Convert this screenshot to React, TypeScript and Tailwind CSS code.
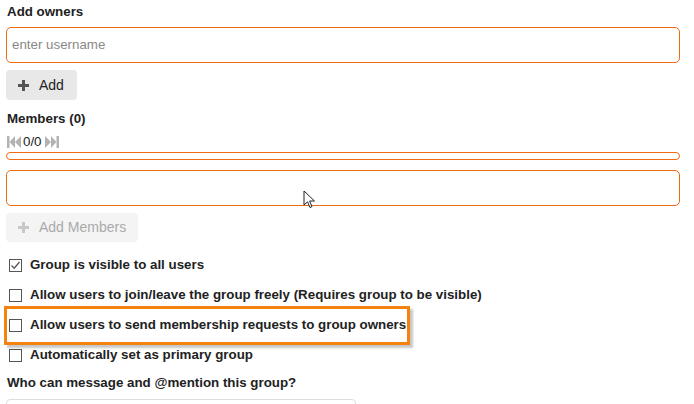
import React from "react";

const font = { fontFamily: '"Liberation Sans", Arial, sans-serif' };

function Plus({ color }: { color: string }) {
  return (
    <svg width="11" height="11" viewBox="0 0 11 11">
      <rect x="4" y="0" width="3" height="11" fill={color} />
      <rect x="0" y="4" width="11" height="3" fill={color} />
    </svg>
  );
}

function First() {
  return (
    <svg width="14" height="12" viewBox="0 0 14 12">
      <rect x="0" y="0" width="2.5" height="12" fill="#b3b3b3" />
      <polygon points="8,0 8,12 2.5,6" fill="#b3b3b3" />
      <polygon points="14,0 14,12 8,6" fill="#b3b3b3" />
    </svg>
  );
}

function Last() {
  return (
    <svg width="14" height="12" viewBox="0 0 14 12">
      <polygon points="0,0 0,12 6,6" fill="#b3b3b3" />
      <polygon points="6,0 6,12 11.5,6" fill="#b3b3b3" />
      <rect x="11.5" y="0" width="2.5" height="12" fill="#b3b3b3" />
    </svg>
  );
}

function Check({ checked, label }: { checked?: boolean; label: string }) {
  return (
    <div className="flex items-center h-[30px] pl-[3px]">
      <div className="w-[13px] h-[13px] border border-[#555] bg-white flex items-center justify-center">
        {checked && (
          <svg width="11" height="11" viewBox="0 0 11 11">
            <polyline points="1.5,5.5 4.2,8.2 9.5,2" fill="none" stroke="#555" strokeWidth="1.3" />
          </svg>
        )}
      </div>
      <span className="ml-[8px] text-[13.33px] font-bold text-[#222]">{label}</span>
    </div>
  );
}

export default function App() {
  return (
    <div className="relative w-[694px] h-[404px] bg-white overflow-hidden" style={font}>
      <div className="pl-[6px] pr-[14px] pt-[3px]">
        <div className="pl-[1px] text-[13.33px] leading-[18px] font-bold text-[#222]">Add owners</div>
        <div className="mt-[6px] h-[36px] border border-[#f06a14] rounded-[5px] flex items-center pl-[5px]">
          <span className="text-[13.33px] text-[#888]">enter username</span>
        </div>
        <div className="mt-[7px] w-[71px] h-[30px] rounded-[4px] bg-[#e8e8e8] flex items-center pl-[12px]">
          <Plus color="#555" />
          <span className="ml-[10px] text-[14px] text-[#222]">Add</span>
        </div>
        <div className="mt-[10px] pl-[1px] text-[13.33px] leading-[18px] font-bold text-[#222]">Members (0)</div>
        <div className="mt-[6px] h-[16px] flex items-center pl-[1px]">
          <First />
          <span className="ml-[2px] mr-[3px] text-[13.33px] text-[#222]">0/0</span>
          <Last />
        </div>
        <div className="mt-[2px] h-[8px] border border-[#f06a14] rounded-full" />
        <div className="mt-[10px] h-[36px] border border-[#f06a14] rounded-[5px]" />
        <div className="mt-[7px] w-[132px] h-[29px] rounded-[4px] bg-[#f4f4f4] flex items-center pl-[12px]">
          <Plus color="#c8c8c8" />
          <span className="ml-[10px] text-[14px] text-[#aaa]">Add Members</span>
        </div>
        <div className="mt-[8px]">
          <Check checked label="Group is visible to all users" />
          <Check label="Allow users to join/leave the group freely (Requires group to be visible)" />
          <Check label="Allow users to send membership requests to group owners" />
          <Check label="Automatically set as primary group" />
        </div>
        <div className="mt-[4px] pl-[1px] text-[13.33px] leading-[18px] font-bold text-[#222]">
          Who can message and @mention this group?
        </div>
        <div className="mt-[7px] w-[350px] h-[30px] border border-[#ddd] rounded-[4px]" />
      </div>

      <div className="absolute left-[4px] top-[306px] w-[406px] h-[39px] border-[3px] border-[#f5820f] shadow-[3px_3px_2px_rgba(0,0,0,0.22)]" />

      <svg className="absolute left-[303px] top-[190px]" width="14" height="20" viewBox="0 0 14 20">
        <path d="M1 1 L1 15 L4.5 11.8 L7 17.5 L9 16.6 L6.6 11 L11.5 11 Z" fill="#fff" stroke="#222" strokeWidth="1" strokeLinejoin="miter" />
      </svg>
    </div>
  );
}
